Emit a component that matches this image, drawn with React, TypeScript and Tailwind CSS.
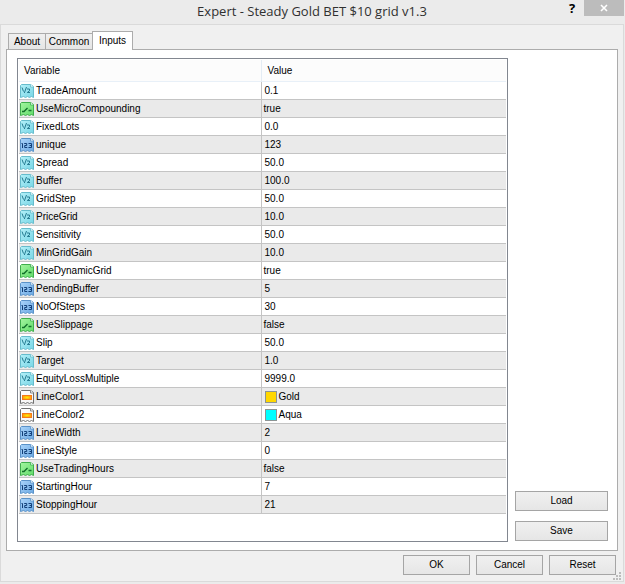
import React from "react";

type Kind = "double" | "bool" | "int" | "color";
type Row = { name: string; kind: Kind; value: string };

const rows: Row[] = [
  { name: "TradeAmount", kind: "double", value: "0.1" },
  { name: "UseMicroCompounding", kind: "bool", value: "true" },
  { name: "FixedLots", kind: "double", value: "0.0" },
  { name: "unique", kind: "int", value: "123" },
  { name: "Spread", kind: "double", value: "50.0" },
  { name: "Buffer", kind: "double", value: "100.0" },
  { name: "GridStep", kind: "double", value: "50.0" },
  { name: "PriceGrid", kind: "double", value: "10.0" },
  { name: "Sensitivity", kind: "double", value: "50.0" },
  { name: "MinGridGain", kind: "double", value: "10.0" },
  { name: "UseDynamicGrid", kind: "bool", value: "true" },
  { name: "PendingBuffer", kind: "int", value: "5" },
  { name: "NoOfSteps", kind: "int", value: "30" },
  { name: "UseSlippage", kind: "bool", value: "false" },
  { name: "Slip", kind: "double", value: "50.0" },
  { name: "Target", kind: "double", value: "1.0" },
  { name: "EquityLossMultiple", kind: "double", value: "9999.0" },
  { name: "LineColor1", kind: "color", value: "Gold" },
  { name: "LineColor2", kind: "color", value: "Aqua" },
  { name: "LineWidth", kind: "int", value: "2" },
  { name: "LineStyle", kind: "int", value: "0" },
  { name: "UseTradingHours", kind: "bool", value: "false" },
  { name: "StartingHour", kind: "int", value: "7" },
  { name: "StoppingHour", kind: "int", value: "21" },
];

const palette: Record<Kind, { from: string; to: string; edge: string }> = {
  double: { from: "#b4f0f8", to: "#78d6e6", edge: "#66bccc" },
  bool: { from: "#a4f5a0", to: "#62dc6a", edge: "#3fae4c" },
  int: { from: "#aad4fa", to: "#6ba8e2", edge: "#5a92c8" },
  color: { from: "#ffffff", to: "#f4f4f4", edge: "#707070" },
};

function TypeIcon({ kind }: { kind: Kind }) {
  const p = palette[kind];
  return (
    <svg viewBox="0 0 14 14" className="h-3.5 w-3.5 shrink-0" aria-hidden="true">
      <defs>
        <linearGradient id={"paper-" + kind} x1="0" y1="0" x2="1" y2="1">
          <stop offset="0" stopColor={p.from} />
          <stop offset="1" stopColor={p.to} />
        </linearGradient>
        <radialGradient id="glow">
          <stop offset="0" stopColor="#fff000" />
          <stop offset="1" stopColor="#ff9a10" />
        </radialGradient>
      </defs>
      <path
        d="M1.5 .5H10.500L13.500 2.500V13.500L11.500 12.500L9.500 13.500L7.500 12.500L5.500 13.500L3.500 12.500L.5 13.500V1.500Z"
        fill={"url(#paper-" + kind + ")"}
        stroke={p.edge}
        strokeWidth="1"
      />
      <path d="M10.500 .5V3H13.500" fill="#f4fcff" stroke={p.edge} strokeWidth=".8" />
      {kind === "double" && (
        <g fill="none" stroke="#257b91" strokeWidth="1">
          <path d="M2 3.500L3.500 7.500M6.500 3L4.300 9" />
          <path d="M7 5H9.500V6.800L7.300 8.500H10" />
        </g>
      )}
      {kind === "bool" && (
        <path d="M2 9.500H4L7.500 6M8.500 8.500H11.500" fill="none" stroke="#12702a" strokeWidth="1.400" />
      )}
      {kind === "int" && (
        <g fill="none" stroke="#123f78" strokeWidth="1">
          <path d="M1.500 5.500H2.500V10" />
          <path d="M4.200 5.500H6.700V7.500H4.700V9.500H7.200" />
          <path d="M8.500 5.500H11.500V9.500H8.500M9.500 7.500H11.500" />
        </g>
      )}
      {kind === "color" && (
        <rect x="2.500" y="5.500" width="9" height="4" fill="url(#glow)" stroke="#f67a18" strokeWidth="1" />
      )}
    </svg>
  );
}

function PushButton({ label, className }: { label: string; className: string }) {
  return (
    <button
      type="button"
      className={
        "h-5 border border-[#a5a5a5] bg-linear-to-b from-[#f0f0f0] to-[#e6e6e6] text-center leading-4 " + className
      }
    >
      {label}
    </button>
  );
}

function ValueCell({ row }: { row: Row }) {
  if (row.kind === "color") {
    return (
      <span className="flex items-center gap-0.5 pl-[3px]">
        <span
          className={
            "h-3 w-3 border border-[#8c9494] " + (row.value === "Gold" ? "bg-[#ffd700]" : "bg-[#00ffff]")
          }
        />
        {row.value}
      </span>
    );
  }
  return <span className={row.kind === "bool" ? "block pl-0.5" : "block pl-[3px]"}>{row.value}</span>;
}

export default function App() {
  return (
    <main className="relative flex min-h-screen flex-col bg-[#ebebeb] pr-px pb-0.5 font-['Liberation_Sans',Arial,sans-serif] text-[10px] leading-4 text-black">
      <header className="flex h-6 items-start">
        <h1 className="flex-1 pl-10 text-center font-['Open_Sans','Noto_Sans',sans-serif] text-[13px] leading-[22px] text-[#303030]">
          Expert - Steady Gold BET $10 grid v1.3
        </h1>
        <button
          type="button"
          aria-label="Help"
          className="-ml-6 h-4 w-6 font-['Open_Sans','Noto_Sans',sans-serif] text-[13px] leading-4 font-bold text-black"
        >
          ?
        </button>
        <button type="button" aria-label="Close" className="flex h-4 w-10 items-center justify-center bg-[#bcbcbc]">
          <svg viewBox="0 0 8 8" className="h-2 w-2" aria-hidden="true">
            <path d="M1 1L7 7M7 1L1 7" stroke="#ffffff" strokeWidth="1.600" />
          </svg>
        </button>
      </header>

      <section className="flex flex-1 flex-col border border-[#dadada] bg-[#f0f0f0] pt-1.5 pr-1 pb-1.5 pl-1">
        <div role="tablist" className="flex h-[18px] items-end pl-[3px]">
          <button
            type="button"
            role="tab"
            aria-selected="false"
            className="h-4 w-[38px] border border-b-0 border-[#acacac] bg-linear-to-b from-[#f0f0f0] to-[#e5e5e5]"
          >
            About
          </button>
          <button
            type="button"
            role="tab"
            aria-selected="false"
            className="h-4 w-[46px] border-t border-[#acacac] bg-linear-to-b from-[#f0f0f0] to-[#e5e5e5]"
          >
            Common
          </button>
          <button
            type="button"
            role="tab"
            aria-selected="true"
            className="z-10 -mb-px h-[19px] w-[41px] border border-b-0 border-[#acacac] bg-white"
          >
            Inputs
          </button>
        </div>

        <div role="tabpanel" className="mx-px flex flex-1 gap-[7px] border border-[#acacac] bg-white pt-2 pr-[9px] pb-2 pl-2.5">
          <div className="flex-1 border border-[#828790] p-px">
            <table className="w-full table-fixed border-collapse text-left">
              <colgroup>
                <col className="w-[242px]" />
                <col />
              </colgroup>
              <thead>
                <tr className="h-[21px] border-b border-[#e8f0f8] bg-[#fcfcfc]">
                  <th className="border-r border-[#e4ecf4] p-0 pt-0.5 pl-[5px] font-normal">Variable</th>
                  <th className="p-0 pt-0.5 pl-1.5 font-normal">Value</th>
                </tr>
              </thead>
              <tbody>
                {rows.map((row) => (
                  <tr key={row.name} className="h-[18px] border-b border-[#c4c4c4] even:bg-[#eaeaea]">
                    <td className="border-r border-[#c4c4c4] p-0 pt-px pl-px">
                      <span className="flex items-center gap-0.5">
                        <TypeIcon kind={row.kind} />
                        {row.name}
                      </span>
                    </td>
                    <td className="p-0 pt-px">
                      <ValueCell row={row} />
                    </td>
                  </tr>
                ))}
              </tbody>
            </table>
          </div>
          <div className="flex w-[93px] flex-col justify-end gap-2.5 pb-px">
            <PushButton label="Load" className="w-full" />
            <PushButton label="Save" className="w-full" />
          </div>
        </div>

        <footer className="mt-1 flex justify-end gap-1.5 pr-[3px]">
          <PushButton label="OK" className="w-[67px]" />
          <PushButton label="Cancel" className="w-[67px]" />
          <PushButton label="Reset" className="w-[67px]" />
        </footer>
      </section>
      <svg viewBox="0 0 8 8" className="absolute right-1 bottom-1 h-2 w-2" aria-hidden="true">
        <path d="M6 0h2v2h-2zM3 3h2v2h-2zM6 3h2v2h-2zM0 6h2v2h-2zM3 6h2v2h-2zM6 6h2v2h-2z" fill="#bcbcbc" />
      </svg>
    </main>
  );
}
